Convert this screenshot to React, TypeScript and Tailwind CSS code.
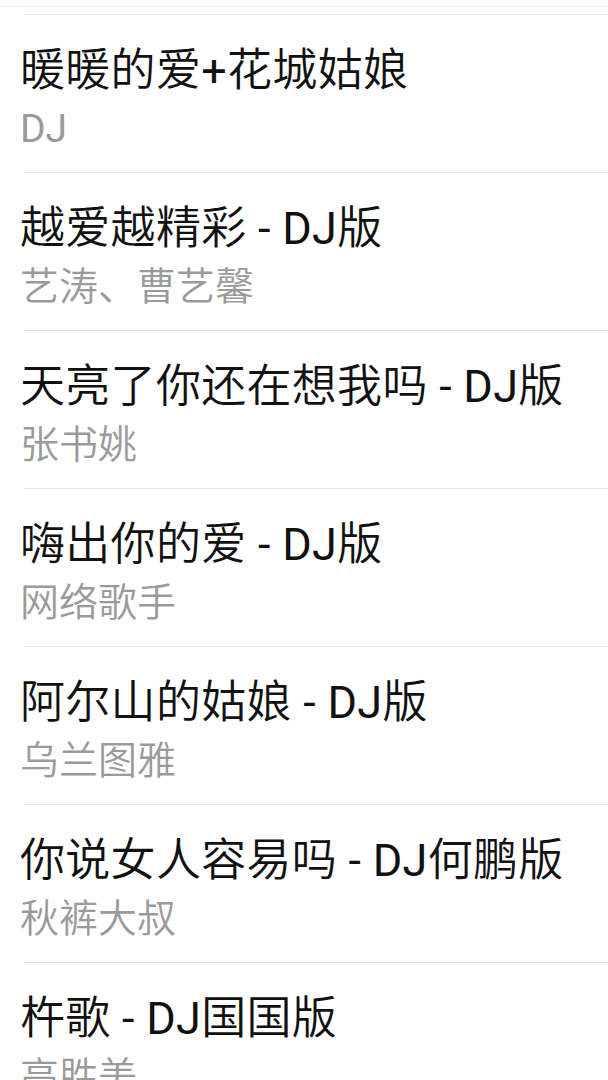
const songs = [
  { title: "暖暖的爱+花城姑娘", artist: "DJ" },
  { title: "越爱越精彩 - DJ版", artist: "艺涛、曹艺馨" },
  { title: "天亮了你还在想我吗 - DJ版", artist: "张书姚" },
  { title: "嗨出你的爱 - DJ版", artist: "网络歌手" },
  { title: "阿尔山的姑娘 - DJ版", artist: "乌兰图雅" },
  { title: "你说女人容易吗 - DJ何鹏版", artist: "秋裤大叔" },
  { title: "杵歌 - DJ国国版", artist: "高胜美" },
];

// latin runs are set in regular Roboto, CJK in a lighter weight
function Mixed({ text }: { text: string }) {
  return (
    <>
      {text.split(/([A-Za-z0-9+\- ]+)/).map((part, i) =>
        /[A-Za-z0-9+\-]/.test(part) ? (
          <span key={i} className="font-normal">
            {part}
          </span>
        ) : (
          <span key={i}>{part}</span>
        )
      )}
    </>
  );
}

export default function App() {
  return (
    <div
      className="h-[1080px] w-[608px] overflow-hidden bg-white"
      style={{ fontFamily: "Roboto, 'Noto Sans CJK SC', sans-serif" }}
    >
      <div className="h-[6px]" />
      <div className="h-px bg-[#ebebeb]" />
      <div className="h-[7px]" />
      <ul>
        {songs.map((s) => (
          <li key={s.title} className="h-[158px]">
            <div className="ml-[24px] h-px bg-[#e6e6e6]" />
            <div className="pl-[20px] pt-[30px]">
              <div className="whitespace-nowrap text-[45px] font-[350] leading-[52px] tracking-[0.3px] text-[#111]">
                <Mixed text={s.title} />
              </div>
              <div className="mt-[10px] whitespace-nowrap text-[39px] font-[350] leading-[44px] text-[#9a9a9a]">
                <Mixed text={s.artist} />
              </div>
            </div>
          </li>
        ))}
      </ul>
    </div>
  );
}
